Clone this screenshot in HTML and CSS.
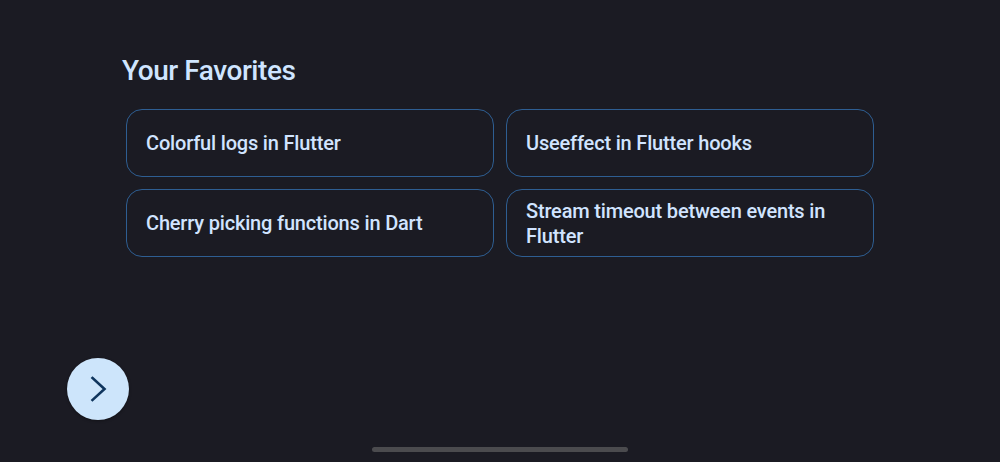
FILE: index.html
```html
<!DOCTYPE html>
<html>
<head>
<meta charset="utf-8">
<link rel="stylesheet" href="styles.css">
</head>
<body>
<div class="screen">
  <main class="content">
    <h1 class="title">Your Favorites</h1>
    <div class="grid">
      <div class="card">Colorful logs in Flutter</div>
      <div class="card">Useeffect in Flutter hooks</div>
      <div class="card">Cherry picking functions in Dart</div>
      <div class="card">Stream timeout between events in Flutter</div>
    </div>
  </main>
  <button class="fab" aria-label="Next">
    <svg width="62" height="62" viewBox="0 0 62 62">
      <polyline points="25.5,20 37.5,31 25.5,42" fill="none" stroke="#0f355d" stroke-width="2.6" stroke-linecap="square" stroke-linejoin="miter"/>
    </svg>
  </button>
  <div class="home-indicator"></div>
</div>
</body>
</html>
```
FILE: styles.css
```css
html, body {
  margin: 0;
  padding: 0;
  background: #1b1b23;
}
.screen {
  position: relative;
  width: 1000px;
  height: 462px;
  overflow: hidden;
  background: #1b1b23;
  font-family: Roboto, "Noto Sans", sans-serif;
}
.content {
  padding: 53px 0 0 122px;
}
.title {
  margin: 0 0 20px 0;
  font-size: 28px;
  line-height: 36px;
  font-weight: 500;
  color: #cfe5ff;
  letter-spacing: -0.45px;
}
.grid {
  display: grid;
  grid-template-columns: 368px 368px;
  gap: 12px;
  margin-left: 4px;
}
.card {
  box-sizing: border-box;
  height: 68px;
  border: 1px solid #2e5e92;
  border-radius: 16px;
  display: flex;
  align-items: center;
  padding: 1px 20px 0 19px;
  font-size: 20px;
  line-height: 25px;
  font-weight: 500;
  color: #d1e4ff;
  letter-spacing: -0.18px;
}
.fab {
  position: absolute;
  left: 67px;
  top: 358px;
  width: 62px;
  height: 62px;
  padding: 0;
  border: none;
  border-radius: 50%;
  background: #cde5fb;
  box-shadow: 0 1px 3px rgba(0,0,0,0.35);
}
.fab svg {
  display: block;
}
.home-indicator {
  position: absolute;
  left: 372px;
  top: 447px;
  width: 256px;
  height: 5px;
  border-radius: 3px;
  background: #4b4b4e;
}
```
